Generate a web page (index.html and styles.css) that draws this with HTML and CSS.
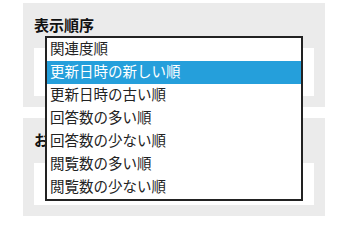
FILE: index.html
```html
<!DOCTYPE html>
<html lang="ja">
<head>
    <meta charset="UTF-8">
    <meta name="viewport" content="width=device-width, initial-scale=1.0">
    <title>表示順序</title>
    <link rel="stylesheet" href="styles.css">
</head>
<body>
    <div class="panel">
        <h2>表示順序</h2>
        <div class="field"></div>
    </div>
    <div class="panel panel-second">
        <h2>お気に入り</h2>
        <div class="field field-short"></div>
    </div>

    <ul class="dropdown">
        <li>関連度順</li>
        <li class="selected">更新日時の新しい順</li>
        <li>更新日時の古い順</li>
        <li>回答数の多い順</li>
        <li>回答数の少ない順</li>
        <li>閲覧数の多い順</li>
        <li>閲覧数の少ない順</li>
    </ul>
</body>
</html>
```

FILE: styles.css
```css
body {
    font-family: "Noto Sans CJK JP", "Liberation Sans", sans-serif;
    background: #fff;
    color: #222;
    margin: 0;
    padding-top: 3px;
    position: relative;
}
.panel {
    background: #ebebeb;
    width: 280px;
    margin-left: 23px;
    padding: 11px 11px 11px 11px;
}
.panel h2 {
    font-size: 15px;
    font-weight: bold;
    line-height: 22px;
    margin: 0 0 12px 0;
    color: #111;
}
.panel-second {
    margin-top: 11px;
}
.panel-second h2 {
    margin-bottom: 12px;
}
.field {
    background: #fff;
    height: 48px;
}
.field-short {
    height: 42px;
}
.dropdown {
    position: absolute;
    left: 45px;
    top: 36px;
    width: 254px;
    margin: 0;
    padding: 0;
    list-style: none;
    background: #fff;
    border: 2px solid #222;
}
.dropdown li {
    font-size: 14.5px;
    line-height: 20px;
    height: 20px;
    padding: 0 0 3px 3px;
    color: #222;
}
.dropdown li.selected {
    background: #259fdb;
    color: #fff;
}
```
